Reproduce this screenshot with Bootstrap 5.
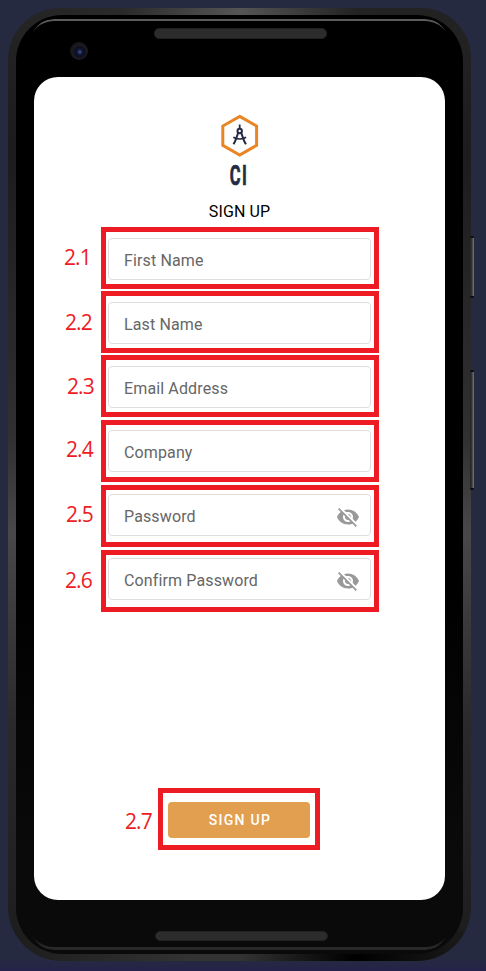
<!DOCTYPE html>
<html lang="en">
<head>
<meta charset="utf-8">
<meta name="viewport" content="width=device-width, initial-scale=1">
<title>Sign up</title>
<link href="https://cdn.jsdelivr.net/npm/bootstrap@5.3.0/dist/css/bootstrap.min.css" rel="stylesheet">
<style>
  body { width: 486px; height: 971px; background: linear-gradient(#252a40 98.8%, #25224a); font-family: Roboto, sans-serif; overflow: hidden; }
  .phone { width: 463px; height: 953px; margin: 8px 0 0 8px; padding: 7px 8px 7px 8px; border-radius: 52px 50px 54px 54px;
    background: linear-gradient(90deg, #232323, #2a2a2a 25%, #555 50%, #232323 75%, #222) top / 100% 30px no-repeat,
      linear-gradient(90deg, #1c1c1c, #333 40%, #333 50%, #000 75%, #1c1c1c) bottom / 100% 30px no-repeat,
      linear-gradient(#242424, #1c1c1c 15%, #303030 45%, #484848 55%, #2a2a2a 75%, #1c1c1c); }
  .bezel { height: 939px; border-radius: 46px; background: linear-gradient(#000 60%, #0a0a0a 90%); }
  .shine { position: absolute; left: 22px; right: 22px; height: 24px; }
  .shine-top { top: 11px; border-top: 2.5px solid #5c5c5c; border-radius: 38px 38px 0 0; -webkit-mask-image: linear-gradient(#000 4px, transparent 15px); mask-image: linear-gradient(#000 4px, transparent 15px); }
  .shine-bottom { bottom: 11px; border-bottom: 3px solid #292929; border-radius: 0 0 38px 38px; -webkit-mask-image: linear-gradient(0deg, #000 4px, transparent 15px); mask-image: linear-gradient(0deg, #000 4px, transparent 15px); }
  .speaker { width: 173px; height: 11px; border-radius: 5px; background: #2c2c2c; border: 1px solid #202020; }
  .speaker-top { margin: 13px auto 38px 138px; }
  .speaker-bottom { margin: 31px auto 0 139px; height: 10px; }
  .camera { position: absolute; left: 62px; top: 34px; width: 18px; height: 18px; border-radius: 50%;
    background: radial-gradient(circle at 54% 55%, #34466b 0 1px, #12163a 2.5px, #0b0d22 5px, #1b1b1d 6.5px, #17171a 9px); }
  .side-key { position: absolute; left: 462px; width: 4px; border-radius: 1px; background: linear-gradient(90deg, #222, #333 40%, #777); border: solid #111; border-width: 2px 0; }
  .key-power { top: 228px; height: 62px; }
  .key-volume { top: 362px; height: 120px; }
  .app { width: 411px; height: 823px; margin: 0 0 0 18px; border-radius: 24px; padding-top: 37px; }
  .logo { width: 48px; height: 86px; }
  .heading { font-size: 16px; line-height: 24px; letter-spacing: .1px; color: #000; margin: 0 0 14px; }
  .fields { width: 263px; gap: 22px; }
  .entry { height: 42px; border: 1px solid #dedede; border-radius: 4px; padding: 3px 10px 0 15px; font-size: 16px; letter-spacing: .13px; color: #666; }
  .entry svg { margin-top: 1px; }
  .callout { position: absolute; border: 5px solid #ed1c24; pointer-events: none; left: -8px; top: -12px; width: 278px; height: 62px; }
  .shift-1 { top: -11px; }
  .shift-2 { top: -10px; }
  .shift-3 { top: -9px; }
  .tag { position: absolute; font: 21px/24px "Open Sans", sans-serif; letter-spacing: -.9px; color: #ed1c24; white-space: nowrap; }
  .tag-1 { left: -45px; top: 6px; }
  .tag-2 { left: -44px; top: 7px; }
  .tag-3 { left: -42px; top: 7px; }
  .tag-4 { left: -43px; top: 6px; }
  .tag-5 { left: -43px; top: 7px; }
  .tag-6 { left: -44px; top: 9px; }
  .tag-7 { left: -43px; top: 7px; }
  .submit { width: 142px; height: 36px; margin-top: 202px; margin-left: 134px; }
  .submit .btn { --bs-btn-bg: #e39f50; --bs-btn-color: #fff; --bs-btn-hover-bg: #d99344; --bs-btn-hover-color: #fff; font-size: 14px; line-height: 20px; font-weight: 500; letter-spacing: 1.3px; border: 0; border-radius: 4px; padding: 0 0 0 2px; }
  .submit .callout { left: -10px; top: -14px; width: 162px; }
</style>
<script src="https://cdn.jsdelivr.net/npm/bootstrap@5.3.0/dist/js/bootstrap.bundle.min.js"></script>
</head>
<body>
<svg width="0" height="0" class="d-none"><symbol id="eye-off" viewBox="0 0 24 24"><path d="M12 7c2.760 0 5 2.240 5 5 0 .65-.13 1.260-.36 1.830l2.920 2.920c1.510-1.260 2.700-2.890 3.430-4.750-1.730-4.390-6-7.500-11-7.500-1.400 0-2.740.25-3.980.7l2.160 2.160C10.740 7.130 11.350 7 12 7zM2 4.270l2.280 2.280.46.46C3.080 8.300 1.780 10.020 1 12c1.730 4.390 6 7.500 11 7.500 1.550 0 3.030-.3 4.380-.84l.42.42L19.730 22 21 20.730 3.270 3 2 4.270zM7.530 9.800l1.550 1.550c-.05.21-.08.43-.08.65 0 1.660 1.340 3 3 3 .22 0 .44-.03.65-.08l1.550 1.550c-.67.33-1.410.53-2.200.53-2.760 0-5-2.240-5-5 0-.79.2-1.530.53-2.200zm4.310-.78l3.150 3.150.02-.16c0-1.660-1.340-3-3-3l-.17.01z"/></symbol></svg>
<div class="d-flow-root overflow-hidden">
<div class="phone position-relative">
  <div class="bezel position-relative d-flex flex-column">
    <div class="speaker speaker-top flex-shrink-0"></div>
    <main class="app bg-white flex-shrink-0 d-flex flex-column align-items-center">
      <svg class="logo overflow-visible" viewBox="215.500 114 48 86" role="img" aria-label="CI">
        <path d="M239.200 116.400 256.100 126v19.400l-16.900 9.700-16.900-9.700V126z" fill="none" stroke="#e98523" stroke-width="3"/>
        <g fill="none" stroke="#252a43" stroke-width="2">
          <path d="M239.200 124.500v4" stroke-width="1.800"/>
          <circle cx="239.200" cy="131" r="2.200" stroke-width="2"/>
          <path d="M237.800 132.500 234.500 141.500 233 144.200M240.600 132.500 243.900 141.500 245.400 144.200"/>
          <path d="M232.800 137.200q6.400 3.500 12.800 0" stroke-width="1.600"/>
        </g>
        <text transform="translate(229.200 184.700) scale(.6 1)" font-family="Roboto, sans-serif" font-weight="700" font-size="27.500" letter-spacing="2.400" fill="#252a43" stroke="#252a43" stroke-width=".7">CI</text>
      </svg>
      <h1 class="heading fw-normal">SIGN UP</h1>
      <div class="fields d-flex flex-column">
        <div class="entry position-relative d-flex align-items-center">First Name<i class="callout"></i><span class="tag tag-1">2.1</span></div>
        <div class="entry position-relative d-flex align-items-center">Last Name<i class="callout"></i><span class="tag tag-2">2.2</span></div>
        <div class="entry position-relative d-flex align-items-center">Email Address<i class="callout"></i><span class="tag tag-3">2.3</span></div>
        <div class="entry position-relative d-flex align-items-center">Company<i class="callout shift-1"></i><span class="tag tag-4">2.4</span></div>
        <div class="entry position-relative d-flex align-items-center justify-content-between">Password<svg width="24" height="24" fill="#999"><use href="#eye-off"/></svg><i class="callout shift-2"></i><span class="tag tag-5">2.5</span></div>
        <div class="entry position-relative d-flex align-items-center justify-content-between">Confirm Password<svg width="24" height="24" fill="#999"><use href="#eye-off"/></svg><i class="callout shift-3"></i><span class="tag tag-6">2.6</span></div>
      </div>
      <div class="submit position-relative d-flex align-self-start"><button type="button" class="btn w-100">SIGN UP</button><i class="callout"></i><span class="tag tag-7">2.7</span></div>
    </main>
    <div class="speaker speaker-bottom flex-shrink-0"></div>
  </div>
  <span class="shine shine-top"></span><span class="shine shine-bottom"></span>
  <span class="camera"></span>
  <span class="side-key key-power"></span><span class="side-key key-volume"></span>
</div>
</div>
</body>
</html>
